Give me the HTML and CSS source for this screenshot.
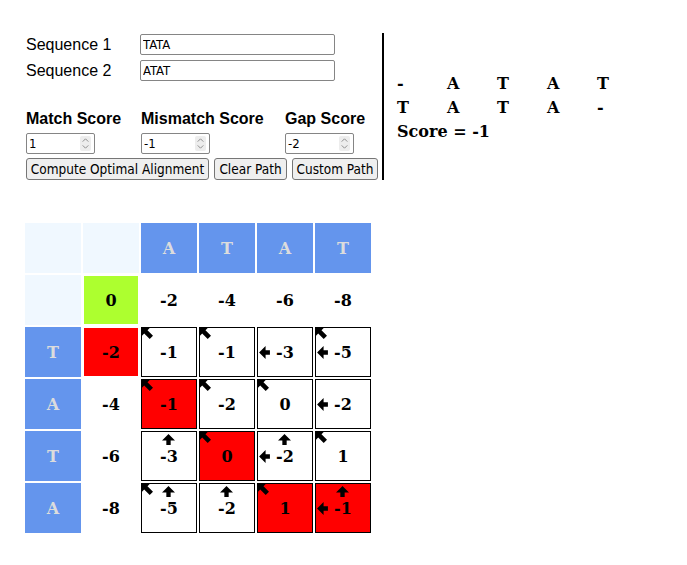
FILE: index.html
```html
<!DOCTYPE html>
<html>
<head>
<meta charset="utf-8">
<title>Alignment</title>
<link rel="stylesheet" href="styles.css">
</head>
<body>
<svg width="0" height="0" class="defs">
  <defs>
    <symbol id="up" viewBox="0 0 12 10"><polygon points="0,6 6,0 12,6 8,6 8,10 4,10 4,6" /></symbol>
    <symbol id="left" viewBox="0 0 10 12"><polygon points="6,0 0,6 6,12 6,8 10,8 10,4 6,4" /></symbol>
    <symbol id="diag" viewBox="0 0 10 10"><polygon points="0,0 7,0 5,2 10,7 7,10 2,5 0,7" /></symbol>
    <symbol id="spin" viewBox="0 0 10 16"><path d="M2 6 L5 3 L8 6 M2 10 L5 13 L8 10" fill="none" stroke="#8a8a8a" stroke-width="1"/></symbol>
  </defs>
</svg>
<div class="top">
  <div class="form">
    <div class="seqs">
      <label class="lbl">Sequence 1</label><input class="seq" type="text" value="TATA">
      <label class="lbl">Sequence 2</label><input class="seq" type="text" value="ATAT">
    </div>
    <div class="scores">
      <label class="slbl">Match Score</label>
      <label class="slbl">Mismatch Score</label>
      <label class="slbl">Gap Score</label>
      <span class="numwrap"><input class="num" type="number" value="1"><svg class="spin"><use href="#spin"/></svg></span>
      <span class="numwrap"><input class="num" type="number" value="-1"><svg class="spin"><use href="#spin"/></svg></span>
      <span class="numwrap"><input class="num" type="number" value="-2"><svg class="spin"><use href="#spin"/></svg></span>
    </div>
    <div class="buttons">
      <button class="b1">Compute Optimal Alignment</button>
      <button class="b2">Clear Path</button>
      <button class="b3">Custom Path</button>
    </div>
  </div>
  <div class="result">
    <div class="align">
      <span>-</span><span>A</span><span>T</span><span>A</span><span>T</span>
      <span>T</span><span>A</span><span>T</span><span>A</span><span>-</span>
    </div>
    <div class="score">Score = -1</div>
  </div>
</div>

<div class="matrix">
  <div class="blank"></div><div class="blank"></div>
  <div class="head">A</div><div class="head">T</div><div class="head">A</div><div class="head">T</div>

  <div class="blank"></div>
  <div class="init start">0</div>
  <div class="init">-2</div><div class="init">-4</div><div class="init">-6</div><div class="init">-8</div>

  <div class="head">T</div>
  <div class="init path">-2</div>
  <div class="cell"><svg class="a-diag"><use href="#diag"/></svg>-1</div>
  <div class="cell"><svg class="a-diag"><use href="#diag"/></svg>-1</div>
  <div class="cell"><svg class="a-left"><use href="#left"/></svg>-3</div>
  <div class="cell"><svg class="a-diag"><use href="#diag"/></svg><svg class="a-left"><use href="#left"/></svg>-5</div>

  <div class="head">A</div>
  <div class="init">-4</div>
  <div class="cell path"><svg class="a-diag"><use href="#diag"/></svg>-1</div>
  <div class="cell"><svg class="a-diag"><use href="#diag"/></svg>-2</div>
  <div class="cell"><svg class="a-diag"><use href="#diag"/></svg>0</div>
  <div class="cell"><svg class="a-left"><use href="#left"/></svg>-2</div>

  <div class="head">T</div>
  <div class="init">-6</div>
  <div class="cell"><svg class="a-up"><use href="#up"/></svg>-3</div>
  <div class="cell path"><svg class="a-diag"><use href="#diag"/></svg>0</div>
  <div class="cell"><svg class="a-up"><use href="#up"/></svg><svg class="a-left"><use href="#left"/></svg>-2</div>
  <div class="cell"><svg class="a-diag"><use href="#diag"/></svg>1</div>

  <div class="head">A</div>
  <div class="init">-8</div>
  <div class="cell"><svg class="a-diag"><use href="#diag"/></svg><svg class="a-up"><use href="#up"/></svg>-5</div>
  <div class="cell"><svg class="a-up"><use href="#up"/></svg>-2</div>
  <div class="cell path"><svg class="a-diag"><use href="#diag"/></svg>1</div>
  <div class="cell path"><svg class="a-up"><use href="#up"/></svg><svg class="a-left"><use href="#left"/></svg>-1</div>
</div>
</body>
</html>
```

FILE: styles.css
```css
html, body {
  margin: 0;
  padding: 0;
  background: #fff;
}

body {
  font-family: "Liberation Sans", Arial, sans-serif;
  font-size: 16px;
  color: #000;
}

.defs {
  position: absolute;
  width: 0;
  height: 0;
}

.top {
  display: flex;
  align-items: flex-start;
  padding: 33px 0 0 26px;
}

.form {
  width: 356px;
  height: 147px;
  border-right: 2px solid #000;
}

.seqs {
  display: grid;
  grid-template-columns: 114px 195px;
  grid-auto-rows: 21px;
  row-gap: 5px;
  padding-top: 1px;
}

.lbl {
  display: flex;
  align-items: center;
}

input, button {
  font-family: "DejaVu Sans Condensed", "DejaVu Sans", sans-serif;
  font-size: 13px;
  color: #000;
}

.seq {
  box-sizing: border-box;
  width: 195px;
  height: 21px;
  margin: 0;
  padding: 1px 2px;
  border: 1px solid #858585;
  border-radius: 2px;
}

.scores {
  display: grid;
  grid-template-columns: 115px 144px auto;
  row-gap: 5px;
  margin-top: 29px;
}

.slbl {
  font-weight: bold;
  line-height: 18px;
}

.numwrap {
  position: relative;
  display: block;
  width: 69px;
  height: 21px;
}

.num {
  box-sizing: border-box;
  width: 69px;
  height: 21px;
  margin: 0;
  padding: 1px 2px;
  border: 1px solid #858585;
  border-radius: 2px;
  -moz-appearance: textfield;
  appearance: textfield;
}

.num::-webkit-inner-spin-button,
.num::-webkit-outer-spin-button {
  -webkit-appearance: none;
  margin: 0;
}

.spin {
  position: absolute;
  right: 4px;
  top: 3px;
  width: 11px;
  height: 15px;
  background: #ededed;
  border-radius: 2px;
}

.buttons {
  display: flex;
  gap: 5px;
  margin-top: 4px;
}

.buttons button {
  box-sizing: border-box;
  margin: 0;
  height: 22px;
  padding: 0 3px;
  font-size: 13.5px;
  white-space: nowrap;
  background: #efefef;
  border: 1px solid #767676;
  border-radius: 3px;
}

.b1 { width: 183px; }
.b2 { width: 73px; }
.b3 { width: 86px; }

.result {
  padding: 39px 0 0 13px;
  font-family: "DejaVu Serif", serif;
  font-weight: bold;
  font-size: 16px;
  line-height: 24px;
}

.align {
  display: grid;
  grid-template-columns: repeat(5, 50px);
}

.matrix {
  display: grid;
  grid-template-columns: repeat(6, 56px);
  grid-auto-rows: 50px;
  gap: 2px;
  margin: 43px 0 0 25px;
  font-family: "DejaVu Serif", serif;
  font-weight: bold;
  font-size: 16px;
}

.matrix > div {
  box-sizing: border-box;
  display: flex;
  align-items: center;
  justify-content: center;
  position: relative;
}

.blank {
  background: #f0f8ff;
}

.head {
  background: #6495ed;
  color: #dcdcdc;
}

.init {
  border: 1px solid #fff;
  background: #fff;
}

.init.start {
  background: #adff2f;
}

.init.path, .cell.path {
  background: #ff0000;
}

.cell {
  border: 1px solid #000;
  background: #fff;
}

.matrix svg {
  position: absolute;
  fill: #000;
}

.a-diag {
  left: 0;
  top: 0;
  width: 11px;
  height: 11px;
}

.a-up {
  left: 20px;
  top: 2px;
  width: 13px;
  height: 11px;
}

.a-left {
  left: 1px;
  top: 18px;
  width: 11px;
  height: 13px;
}
```
